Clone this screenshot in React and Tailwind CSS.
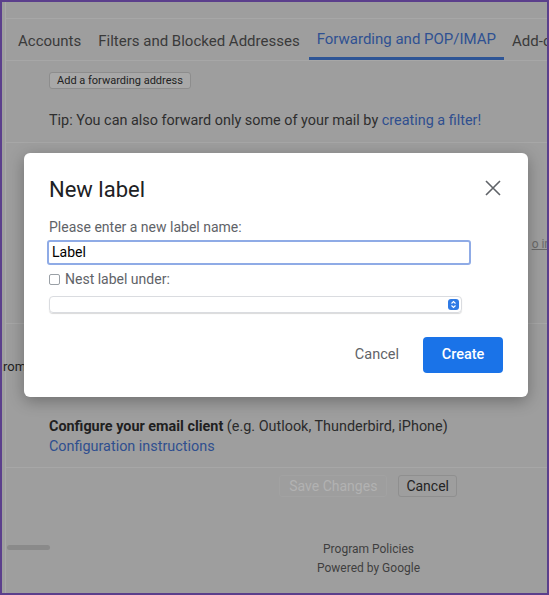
export default function App() {
  return (
    <div
      className="relative w-[549px] h-[595px] overflow-hidden border-2 border-[#5b3f8c] bg-[#9e9e9e] text-[#2b2b2b]"
      style={{ fontFamily: "Roboto, 'Noto Sans', Arial, sans-serif" }}
    >
      {/* dimmed page behind the dialog */}
      <div className="ml-[3px] h-full border-l border-[#a9a9a9]">
        <div className="h-[17px] border-b border-[#a7a7a7]" />

        {/* tabs */}
        <div className="flex h-[42px] items-stretch border-b border-[#a7a7a7] pl-[9px] text-[15px] text-[#3a3a3a] whitespace-nowrap">
          <div className="flex items-center px-[3px] pt-[3px]">Accounts</div>
          <div className="flex items-center pl-[14px] pr-[3px] pt-[3px]">Filters and Blocked Addresses</div>
          <div className="ml-[6px] flex items-center border-b-[3px] border-[#2e5596] px-[8px] pt-[3px] text-[#2f5192]">
            Forwarding and POP/IMAP
          </div>
          <div className="flex items-center pl-[8px] pt-[3px]">Add-ons</div>
        </div>

        <div className="pl-[43px] pt-[6px]">
          <button className="h-[17px] rounded-[3px] border border-[#8d8d8d] bg-[#a8a8a8] px-[7px] text-[11px] leading-none text-[#222]">
            Add a forwarding address
          </button>
        </div>

        <div className="mt-[19px] pl-[43px] text-[14.4px] text-[#2e2e2e]">
          Tip: You can also forward only some of your mail by{" "}
          <span className="text-[#2f4f8f]">creating a filter!</span>
        </div>

        <div className="mt-[10px] border-b border-[#a7a7a7]" />

        {/* rows under the dialog */}
        <div className="relative h-[181px] border-b border-[#a7a7a7]">
          <div className="absolute right-[-4px] top-[92px] text-[12px] text-[#6a6a6a] underline">o in</div>
        </div>
        <div className="h-[93px] pt-[33px] -ml-[3px] text-[13px] text-[#222]">rom</div>

        <div className="pl-[43px] text-[14.4px] leading-[20px] text-[#2b2b2b]">
          <div>
            <span className="font-bold text-[#1f1f1f]">Configure your email client</span> (e.g. Outlook, Thunderbird, iPhone)
          </div>
          <div className="text-[#2f4f8f]">Configuration instructions</div>
        </div>

        <div className="mt-[10px] border-b border-[#a7a7a7]" />

        <div className="flex justify-end gap-[11px] pr-[90px] pt-[7px] text-[14px]">
          <button className="h-[22px] rounded-[3px] border border-[#a2a2a2] px-[9px] text-[#b2b2b2]">Save Changes</button>
          <button className="h-[22px] rounded-[3px] border border-[#8f8f8f] px-[7px] text-[#242424]">Cancel</button>
        </div>

        <div className="relative mt-[43px] text-center text-[12px] leading-[19px] text-[#3f3f3f]">
          <div className="absolute left-[1px] top-[5px] h-[5px] w-[43px] rounded-full bg-[#8a8a8a]" />
          <div className="pl-[184px]">Program Policies</div>
          <div className="pl-[184px]">Powered by Google</div>
        </div>
      </div>

      {/* dialog */}
      <div className="absolute left-[22px] top-[151px] w-[504px] h-[244px] rounded-[6px] bg-white shadow-[0_4px_16px_rgba(0,0,0,0.3)] px-[25px] pt-[24px]">
        <div className="flex items-start justify-between">
          <div className="text-[22px] leading-[26px] text-[#202124]">New label</div>
          <svg width="18" height="18" viewBox="0 0 18 18" className="mr-[1px] mt-[2px]">
            <path d="M2 2 L16 16 M16 2 L2 16" stroke="#5f6368" strokeWidth="1.6" fill="none" />
          </svg>
        </div>

        <div className="mt-[16px] text-[14px] leading-[16px] text-[#5f6368]">Please enter a new label name:</div>
        <div className="-ml-[2px] mt-[5px] flex h-[25px] w-[424px] items-center rounded-[3px] border-2 border-[#8fabe6] px-[3px] text-[14px] text-black">
          Label
        </div>

        <div className="mt-[4px] flex items-center gap-[5px] text-[14px] text-[#5f6368]">
          <span className="inline-block h-[11px] w-[11px] rounded-[2px] border border-[#9aa0a6]" />
          Nest label under:
        </div>

        <div className="mt-[6px] flex h-[17px] w-[413px] items-center justify-end rounded-[4px] border border-[#dadce0] shadow-[0_1px_1px_rgba(0,0,0,0.15)] pr-[2px]">
          <div className="flex h-[11px] w-[11px] items-center justify-center rounded-[3px] bg-[#2f7ae5]">
            <svg width="7" height="9" viewBox="0 0 7 9">
              <path d="M1.5 3.5 L3.5 1.5 L5.5 3.5 M1.5 5.5 L3.5 7.5 L5.5 5.5" stroke="white" strokeWidth="1.1" fill="none" />
            </svg>
          </div>
        </div>

        <div className="mt-[24px] flex items-center justify-end gap-[24px]">
          <span className="text-[14.5px] text-[#5f6368]">Cancel</span>
          <button className="h-[36px] w-[80px] rounded-[4px] bg-[#1a73e8] text-[14.5px] font-medium text-white">Create</button>
        </div>
      </div>
    </div>
  );
}
